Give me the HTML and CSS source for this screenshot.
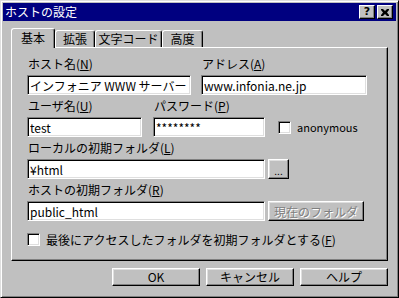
FILE: index.html
```html
<!DOCTYPE html>
<html lang="ja">
<head>
  <meta charset="UTF-8">
  <title>ホストの設定</title>
  <link rel="stylesheet" href="styles.css">
</head>
<body>
  <div class="window">
    <!-- Title bar -->
    <div class="titlebar">
      <span class="title">ホストの設定</span>
      <div class="title-buttons">
        <span class="tbtn help-glyph">?</span>
        <span class="tbtn">
          <svg width="8" height="7" viewBox="0 0 8 7"><path d="M0 0h2l2 2 2-2h2v1L6 3.5 8 6v1H6L4 5 2 7H0V6l2-2.5L0 1z" fill="#000"/></svg>
        </span>
      </div>
    </div>

    <div class="dialog-body">
      <!-- Tabs -->
      <div class="tabs">
        <div class="tab selected tab-basic">基本</div>
        <div class="tab tab-ext">拡張</div>
        <div class="tab tab-code">文字コード</div>
        <div class="tab tab-adv">高度</div>
      </div>

      <div class="panel">
        <div class="row">
          <div class="field host">
            <label>ホスト名(<u>N</u>)</label>
            <input class="edit" type="text" value="インフォニア WWW サーバー">
          </div>
          <div class="field address">
            <label>アドレス(<u>A</u>)</label>
            <input class="edit" type="text" value="www.infonia.ne.jp">
          </div>
        </div>

        <div class="row">
          <div class="field user">
            <label>ユーザ名(<u>U</u>)</label>
            <input class="edit" type="text" value="test">
          </div>
          <div class="field password">
            <label>パスワード(<u>P</u>)</label>
            <input class="edit" type="text" value="********">
          </div>
          <div class="check anon">
            <span class="box"></span>
            <span>anonymous</span>
          </div>
        </div>

        <div class="row">
          <div class="field wide">
            <label>ローカルの初期フォルダ(<u>L</u>)</label>
            <div class="with-button">
              <input class="edit" type="text" value="¥html">
              <button class="btn browse">...</button>
            </div>
          </div>
        </div>

        <div class="row">
          <div class="field wide">
            <label>ホストの初期フォルダ(<u>R</u>)</label>
            <div class="with-button">
              <input class="edit" type="text" value="public_html">
              <button class="btn current" disabled>現在のフォルダ</button>
            </div>
          </div>
        </div>

        <div class="check last">
          <span class="box"></span>
          <span>最後にアクセスしたフォルダを初期フォルダとする(<u>F</u>)</span>
        </div>
      </div>

      <div class="actions">
        <button class="btn action">OK</button>
        <button class="btn action">キャンセル</button>
        <button class="btn action">ヘルプ</button>
      </div>
    </div>
  </div>
</body>
</html>
```

FILE: styles.css
```css
body {
  margin: 0;
  background-color: #c0c0c0;
  font-family: "Noto Sans CJK JP", "DejaVu Sans", sans-serif;
  font-size: 12px;
  color: #000;
}

.window {
  width: 399px;
  height: 298px;
  box-sizing: border-box;
  background-color: #c0c0c0;
  border: 1px solid;
  border-color: #dfdfdf #000 #000 #dfdfdf;
  box-shadow: inset 1px 1px #fff, inset -1px -1px #808080;
  padding: 2px;
}

.titlebar {
  height: 18px;
  background-color: #000080;
  display: flex;
  align-items: center;
  justify-content: space-between;
  padding: 0 3px 0 2px;
}

.title {
  color: #fff;
  line-height: 18px;
}

.title-buttons {
  display: flex;
  gap: 2px;
}

.tbtn {
  width: 16px;
  height: 14px;
  box-sizing: border-box;
  background-color: #c0c0c0;
  border: 1px solid;
  border-color: #fff #000 #000 #fff;
  box-shadow: inset -1px -1px #808080;
  display: flex;
  align-items: center;
  justify-content: center;
}

.help-glyph {
  font-family: "DejaVu Sans", sans-serif;
  font-weight: bold;
  font-size: 11px;
  line-height: 12px;
}

.dialog-body {
  padding: 7px 8px 0 8px;
}

.tabs {
  display: flex;
  height: 19px;
  align-items: flex-end;
  position: relative;
  z-index: 1;
}

.tab {
  height: 17px;
  box-sizing: border-box;
  border: 1px solid;
  border-bottom: none;
  border-color: #fff #000 #000 #fff;
  border-radius: 3px 3px 0 0;
  box-shadow: inset -1px 0 #808080;
  text-align: center;
  line-height: 16px;
}

.tab.selected {
  height: 20px;
  margin-bottom: -1px;
  background-color: #c0c0c0;
  line-height: 18px;
}

.tab-basic { width: 44px; }
.tab-ext { width: 40px; }
.tab-code { width: 67px; }
.tab-adv { width: 41px; }

.panel {
  height: 214px;
  box-sizing: border-box;
  border: 1px solid;
  border-color: #fff #000 #000 #fff;
  box-shadow: inset -1px -1px #808080;
  padding: 9px 15px 0 15px;
  display: flex;
  flex-direction: column;
  gap: 4px;
}

.row {
  display: flex;
  align-items: flex-end;
  gap: 10px;
}

.field {
  display: flex;
  flex-direction: column;
  gap: 4px;
}

.field label {
  height: 14px;
  line-height: 14px;
  padding-left: 1px;
}

.edit {
  height: 20px;
  box-sizing: border-box;
  margin: 0;
  padding: 0 2px;
  font: inherit;
  color: #000;
  background-color: #fff;
  border: 1px solid;
  border-color: #808080 #fff #fff #808080;
  box-shadow: inset 1px 1px #000, inset -1px -1px #dfdfdf;
  outline: none;
}

.host .edit { width: 164px; }
.address .edit { width: 166px; }
.user .edit { width: 115px; }
.password { margin-left: 1px; }
.password .edit { width: 112px; }
.wide .edit { width: 238px; }

.with-button {
  display: flex;
  gap: 3px;
}

.btn {
  height: 20px;
  box-sizing: border-box;
  margin: 0;
  padding: 0;
  font: inherit;
  color: #000;
  background-color: #c0c0c0;
  border: 1px solid;
  border-color: #fff #000 #000 #fff;
  box-shadow: inset -1px -1px #808080, inset 1px 1px #dfdfdf;
}

.browse {
  width: 21px;
  font-size: 10px;
  line-height: 12px;
  padding-top: 4px;
}

.current {
  width: 96px;
  color: #808080;
  text-shadow: 1px 1px #fff;
}

.check {
  display: flex;
  align-items: center;
  gap: 6px;
}

.box {
  width: 13px;
  height: 13px;
  box-sizing: border-box;
  background-color: #fff;
  border: 1px solid;
  border-color: #808080 #fff #fff #808080;
  box-shadow: inset 1px 1px #000, inset -1px -1px #dfdfdf;
}

.anon {
  margin-left: 3px;
  height: 20px;
  font-size: 11px;
}

.last {
  margin-top: 6px;
}

.actions {
  display: flex;
  justify-content: flex-end;
  gap: 6px;
  margin-top: 7px;
}

.action {
  width: 88px;
  height: 18px;
  line-height: 14px;
}
```
